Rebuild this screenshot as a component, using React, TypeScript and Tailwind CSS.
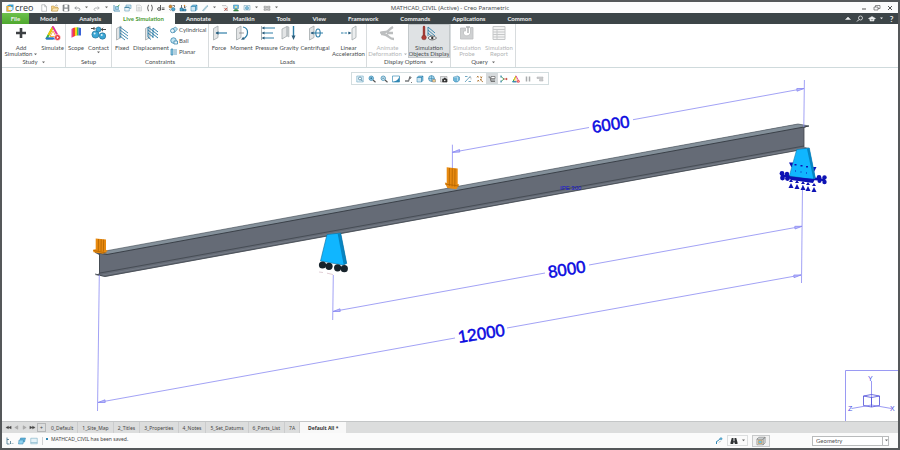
import type { ReactNode } from 'react';
import clsx from 'clsx';

function Svg({ children, className = 'size-4' }: { children: ReactNode; className?: string }) {
  return (
    <svg viewBox="0 0 16 16" className={clsx('shrink-0', className)} fill="none" stroke="currentColor" aria-hidden="true">
      {children}
    </svg>
  );
}

function Caret({ className = 'text-[#666]' }: { className?: string }) {
  return (
    <svg viewBox="0 0 4 3" className={clsx('inline-block w-[3px] h-[3px] shrink-0', className)} fill="currentColor" aria-hidden="true">
      <path d="M0 0h4L2 2.6z" />
    </svg>
  );
}

const plate = <path d="M2.500 3.500 7 1v11.500L2.500 15z" fill="#e3e5e6" stroke="#a3a9ac" strokeWidth=".8" />;

const icons: Record<string, ReactNode> = {
  // ribbon
  add: <path d="M8 3v10M3 8h10" stroke="#3d4043" strokeWidth="2.600" />,
  simulate: (
    <>
      <path d="M8 2 1.600 13.500H8" stroke="#35b34a" strokeWidth="2" strokeLinejoin="round" />
      <path d="M8 2 3.500 10" stroke="#f5c800" strokeWidth="2" />
      <path d="m8 2 6 11" stroke="#e5399b" strokeWidth="2" strokeLinecap="round" />
      <path d="M1.600 13.500H12" stroke="#2b6fd6" strokeWidth="2" strokeLinecap="round" />
      <path d="M8 6 5 11.500h6z" fill="#fff" stroke="#f59a1b" strokeWidth=".8" />
      <circle cx="12.500" cy="12.500" r="3" fill="#e8383d" stroke="#fff" strokeWidth=".6" />
      <path d="M11.800 11v3l2-1.500z" fill="#fff" stroke="none" />
    </>
  ),
  scope: (
    <g stroke="none">
      <path d="m3.500 4 1.500-1v9l-1.500.8z" fill="#e64090" />
      <path d="m5 3 2-.5V11l-2 1z" fill="#f3452f" />
      <path d="m7 2.500 2-.3v8.300l-2 .5z" fill="#f7d417" />
      <path d="m9 2.200 1.500.2v8l-1.500.1z" fill="#48c04b" />
      <path d="M10.500 2.400 13 3v7.500l-2.500-.1z" fill="#3a62d8" />
    </g>
  ),
  contact: (
    <>
      <circle cx="4.500" cy="9.500" r="3.600" fill="#3ba6d4" stroke="#17678f" strokeWidth=".6" />
      <circle cx="11.500" cy="11" r="3.200" fill="#3ba6d4" stroke="#17678f" strokeWidth=".6" />
      <circle cx="7.500" cy="4.500" r="2.500" fill="#3ba6d4" stroke="#17678f" strokeWidth=".6" />
      <circle cx="3.600" cy="8.500" r="1" fill="#d7f0fa" stroke="none" />
      <circle cx="10.700" cy="10" r="1" fill="#d7f0fa" stroke="none" />
      <path d="M10.500 4.500H15M12 2.800 10.300 4.500 12 6.200M0 3.500h3.500M2.500 2 4 3.500 2.500 5" stroke="#333" strokeWidth=".9" />
    </>
  ),
  fixed: (
    <>
      {plate}
      <path d="m6 2 8 6M6 5l8 6M6 8l8 6M6 11l5 4M6 2v11" stroke="#2f7fa8" strokeWidth=".9" />
    </>
  ),
  displacement: (
    <>
      {plate}
      <path d="m5 2 5 4M5 5l5 4M5 8l5 4M10 3l5 4M10 6l5 4M10 9l5 4M5 2v10M10 3v10M5 12l3 2.500" stroke="#2f7fa8" strokeWidth="1" />
    </>
  ),
  force: (
    <>
      {plate}
      <path d="M5 8h11" stroke="#2f7fa8" strokeWidth="1.200" />
      <path d="m4.500 8 3-1.800v3.600z" fill="#2f5f7c" stroke="none" />
    </>
  ),
  moment: (
    <>
      {plate}
      <path d="M9 2c6 1 6 9 0 12" stroke="#2f7fa8" strokeWidth="1.200" />
      <path d="M5 8h5" stroke="#777" strokeWidth=".7" />
      <path d="m7 14.800 2.200-3 1.500 2.600z" fill="#2f5f7c" stroke="none" />
    </>
  ),
  pressure: (
    <>
      <path d="M2.500 1v14" stroke="#a3a9ac" strokeWidth=".9" />
      <path d="M4 3h12M4 8h10M4 13h11" stroke="#2f7fa8" strokeWidth="1.200" />
      <path d="m2.500 3 3-1.500v3zM2.500 8l3-1.500v3zM2.500 13l3-1.500v3z" fill="#2f5f7c" stroke="none" />
    </>
  ),
  gravity: (
    <>
      <path d="M1 4 6 1.500V11l-5 3z" fill="#e3e5e6" stroke="#a3a9ac" strokeWidth=".8" />
      <path d="m6 1.500 2 .5v10l-2-1z" fill="#c5cacc" stroke="#a3a9ac" strokeWidth=".5" />
      <path d="M12.500 1v10" stroke="#2f7fa8" strokeWidth="1.400" />
      <path d="M10.500 10.500h4l-2 4.500z" fill="#2f5f7c" stroke="none" />
    </>
  ),
  centrifugal: (
    <>
      {plate}
      <ellipse cx="11" cy="8" rx="2.200" ry="4" stroke="#2f7fa8" strokeWidth="1.100" />
      <path d="M4 8h12" stroke="#2f7fa8" />
      <path d="m3.500 8 3-1.600v3.200z" fill="#2f5f7c" stroke="none" />
    </>
  ),
  linear: (
    <>
      <path d="m11 3.500 4-2.500v11.500L11 15z" fill="#eceeef" stroke="#a3a9ac" strokeWidth=".8" />
      <path d="M0 8h9" stroke="#2f7fa8" strokeWidth="1.200" strokeDasharray="2.500 1" />
      <path d="m10.500 8-3-1.600v3.200z" fill="#2f5f7c" stroke="none" />
    </>
  ),
  animate: <path d="M0 8c2-1.500 6 0 8-2s3-3 5-4M1 9c4-.5 6 1 8 3s3 2 5 2M7 8h6" stroke="#bcbebf" strokeWidth="2.400" />,
  objects: (
    <>
      <path d="M3 2v8" stroke="#a03a35" strokeWidth="2.400" strokeLinecap="round" />
      <circle cx="3" cy="12.500" r="2.300" fill="#b03a34" stroke="#70302d" strokeWidth=".5" />
      <path d="m7 2 7 6M7 5l7 6M7 8l4 3.500M7 2v9" stroke="#2f7fa8" strokeWidth=".9" />
      <path d="M7 13c2-2.500 6-2.500 8.500 0-2.500 2.500-6.500 2.500-8.500 0z" fill="#fff" stroke="#444" strokeWidth=".8" />
      <circle cx="11.300" cy="13" r="1.200" fill="#333" stroke="none" />
    </>
  ),
  probe: (
    <>
      <path d="M1.500 3h5v3h-2v3c2 3 6 2 7-1V2.500h2.500V14H1.500z" fill="#cfd1d2" stroke="#bcbebf" strokeWidth=".8" />
      <path d="M7 2h4M9 2v6" stroke="#b0b2b3" strokeWidth="1.400" />
    </>
  ),
  report: (
    <>
      <path d="M2 1.500h12v13H2z" stroke="#c6c8c9" fill="#f3f3f3" />
      <path d="M2 4.500h12M2 7h12M2 9.500h12M2 12h12M6 4v10" stroke="#c6c8c9" />
    </>
  ),
  cylindrical: (
    <>
      <path d="M4 6.500 11 2l4 4-6 7z" fill="#bfe3f2" stroke="#2f7fa8" strokeWidth="1.300" />
      <circle cx="5" cy="9.500" r="4" fill="#e8f5fb" stroke="#2f7fa8" strokeWidth="1.500" />
    </>
  ),
  ball: (
    <>
      <circle cx="7" cy="7" r="5.500" fill="#bfe3f2" stroke="#2f7fa8" strokeWidth="1.500" />
      <path d="M8 8h7v6H8z" fill="#e8f5fb" stroke="#2f7fa8" strokeWidth="1.500" />
    </>
  ),
  planar: (
    <>
      <path d="M2 2h4v12H2z" fill="#8ecbe6" stroke="#2f7fa8" strokeWidth="1.400" />
      <path d="M8 4h6M8 8h6M8 12h6" stroke="#2f7fa8" strokeWidth="1.500" />
    </>
  ),
  // quick access
  new: <path d="M3.500 1.500h6l3.500 4v9H3.500zM9.500 1.500v4H13" fill="#fff" stroke="#8b8f92" />,
  open: (
    <>
      <path d="M1 14V4h5l1.500 2H13v8z" fill="#f6d58c" stroke="#b98a35" />
      <path d="m1 14 3-6h11l-2 6z" fill="#fbe7b5" stroke="#b98a35" />
      <path d="M9 4c0-2 3-3 4-1" stroke="#555" />
    </>
  ),
  save: (
    <>
      <path d="M2 2h12v12H2z" fill="#8d9295" stroke="#5d6265" />
      <path d="M5 2h6v5H5zM4.500 9.500h7V14h-7z" fill="#fff" stroke="none" />
    </>
  ),
  undo: <path d="M4 8h6c5 0 5 5 1 5M6.500 5 3.500 8l3 3" stroke="#8a8d90" strokeWidth="1.800" />,
  redo: <path d="M12 8H6c-5 0-5 5-1 5M9.500 5l3 3-3 3" stroke="#a6a8aa" strokeWidth="1.800" />,
  regen: (
    <>
      <path d="M2 2v12h12" stroke="#2f7fa8" strokeWidth="1.600" />
      <path d="M5 5h6v6H5z" fill="#9ad0e8" stroke="#2f7fa8" />
      <path d="m9 5 4-3" stroke="#49a14b" strokeWidth="2" />
    </>
  ),
  windows: (
    <>
      <path d="M4 2h10v7H4z" fill="#cfe8f4" stroke="#4a88a8" />
      <path d="M1.500 6h9v8h-9z" fill="#e8f3f8" stroke="#4a88a8" />
      <path d="M1.500 6h9v2h-9z" fill="#4a88a8" stroke="none" />
    </>
  ),
  paste: <path d="M3 2h7l3 3v9H3zM5 7h6M5 9.500h6M5 12h6" stroke="#b5b8ba" fill="#f4f4f4" />,
  braces: <path d="M6 2C3 2 5 7 2.500 8 5 9 3 14 6 14M10 2c3 0 1 5 3.500 6-2.500 1-.5 6-3.500 6" stroke="#444" strokeWidth="1.800" />,
  equals: (
    <>
      <circle cx="4" cy="10" r="2.800" stroke="#444" strokeWidth="1.700" />
      <path d="M7 2v11M9.500 8H15M9.500 11H15" stroke="#444" strokeWidth="1.700" />
    </>
  ),
  parts: (
    <>
      <circle cx="5" cy="5" r="3" fill="#d98a2b" stroke="#7a5520" />
      <circle cx="10.500" cy="10.500" r="3.500" fill="#4fa6ce" stroke="#205f80" />
      <path d="M9 3h4v3M3 10l2 3" stroke="#333" strokeWidth="1.300" />
    </>
  ),
  layers: (
    <>
      <path d="M2 8h6v6H2zM8 10h6v4H8z" fill="#4fa6ce" stroke="#205f80" />
      <path d="M5 2v6M11 3v5l3-3" stroke="#333" strokeWidth="1.400" />
      <circle cx="11" cy="3" r="1.500" fill="#d98a2b" stroke="none" />
    </>
  ),
  box: (
    <>
      <path d="M2 5h9v9H2z" fill="#cfe8f4" stroke="#2f7fa8" />
      <path d="m2 5 3-3h9l-3 3zM14 2v9l-3 3V5z" fill="#79bfe0" stroke="#2f7fa8" />
    </>
  ),
  line: <path d="M3 13 12 3l2 1-9 10z" fill="#b9dcea" stroke="#6a9ab0" />,
  cut: (
    <>
      <path d="M2 3h8l3 3v7H6" fill="#f1f1f1" stroke="#9a9da0" />
      <path d="m7 8 5 5M12 8l-5 5" stroke="#c0392b" strokeWidth="1.600" />
    </>
  ),
  render: (
    <>
      <path d="M3 2h10v7H3z" fill="#6cc0e6" stroke="#2f7fa8" />
      <path d="M3 14c2-5 8-5 10 0z" fill="#3f9a4d" stroke="#2b6b36" />
      <circle cx="8" cy="6" r="2" fill="#f3e3a0" stroke="none" />
    </>
  ),
  select: (
    <>
      <path d="M2 3h12v9H2z" fill="#e3f1f8" stroke="#6a9ab0" />
      <circle cx="8" cy="8" r="3" fill="#8ac5df" stroke="#2f7fa8" />
    </>
  ),
  grid: <path d="M2 4.500h5v3H2zM9 4.500h5v3H9zM2 9.500h5v3H2zM9 9.500h5v3H9z" fill="#d5d7d8" stroke="#777" />,
  // graphics toolbar
  refit: (
    <>
      <path d="M1.500 2h13v12h-13z" fill="#dff0f8" stroke="#5f9cb8" />
      <circle cx="8" cy="7" r="3" fill="#fff" stroke="#2f6f90" strokeWidth="1.300" />
      <path d="m10 9 3 3.500" stroke="#2f6f90" strokeWidth="1.600" />
    </>
  ),
  zoomIn: (
    <>
      <circle cx="6.500" cy="6.500" r="4.500" fill="#8fd0ee" stroke="#2f7fa8" strokeWidth="1.400" />
      <path d="m10 10 5 4.500" stroke="#555" strokeWidth="2.200" />
      <path d="M4.500 6.500h4M6.500 4.500v4" stroke="#174e6b" strokeWidth="1.200" />
    </>
  ),
  zoomOut: (
    <>
      <circle cx="6.500" cy="6.500" r="4.500" fill="#c6e6f4" stroke="#2f7fa8" strokeWidth="1.400" />
      <path d="m10 10 5 4.500" stroke="#555" strokeWidth="2.200" />
      <path d="M4.500 6.500h4" stroke="#174e6b" strokeWidth="1.200" />
    </>
  ),
  repaint: (
    <>
      <path d="M1 2h14v12H1z" fill="#fff" stroke="#3d8fb7" strokeWidth="1.400" />
      <path d="M1 14C8 13 13 9 15 3v11z" fill="#2f86b3" stroke="none" />
    </>
  ),
  tools: (
    <>
      <path d="M2 12h7l3-8" stroke="#7a7d80" strokeWidth="2.600" />
      <path d="M12 2v5l3-2M14 15h2" stroke="#444" strokeWidth="1.400" />
    </>
  ),
  globe: (
    <>
      <circle cx="7" cy="7" r="5.800" fill="#a9d9ee" stroke="#2f7fa8" strokeWidth="1.300" />
      <path d="M7 1v12M1 7h12" stroke="#2f7fa8" />
      <path d="M9 9h6v5H9z" fill="#f1cf8f" stroke="#777" />
    </>
  ),
  camera: (
    <>
      <path d="M1 3h13v11H1z" fill="#e1e4e6" stroke="#888" />
      <path d="M5 8h9v6H5zM8 6h3v2H8z" fill="#333" stroke="#333" />
      <circle cx="9.500" cy="11" r="1.500" fill="#fff" stroke="none" />
    </>
  ),
  views: (
    <>
      <path d="m3 4 8-2 4 2v6l-4 4H6L3 11z" fill="#6db7da" stroke="#2f7fa8" />
      <path d="M3 4h8v8" stroke="#fff" />
    </>
  ),
  axis: (
    <>
      <path d="M2 14 13 2M2 3h5M9 13h5" stroke="#4d93b4" strokeWidth="1.600" />
      <path d="M10 5h4v4" stroke="#888" />
    </>
  ),
  points: <path d="m2 2 3 3m0-3L2 5m7-2 3 3m0-3L9 6M3 10l3 3m0-3-3 3m5-4 6 5M8 9l4-1" stroke="#a86a20" strokeWidth="1.600" />,
  annot: (
    <>
      <path d="M6 3h8v4H6z" fill="#fff" stroke="#555" strokeWidth="1.200" />
      <path d="M1 4h3M6 10h8M6 13h8M4 4l2 9" stroke="#555" strokeWidth="1.500" />
    </>
  ),
  spin: (
    <>
      <path d="m2 3 6 5-6 5" stroke="#3c9f55" strokeWidth="1.700" />
      <path d="M7 8h7M12 6l2.500 2L12 10" stroke="#c0392b" strokeWidth="1.600" />
      <path d="M2 1v4M2 11v4" stroke="#2f7fa8" strokeWidth="2.200" />
    </>
  ),
  pause: <path d="M5 3v10M11 3v10" stroke="#a9abad" strokeWidth="3" />,
  stop: <path d="M2 4h12v3H2zM7 9h7v3H7z" fill="#cfd1d2" stroke="#a9abad" />,
  // status bar
  tree: <path d="M2 1v13h5M2 5h4M9 13h1.500M13 13h1.500M9 8v6" stroke="#44748c" strokeWidth="1.600" />,
  browser: (
    <>
      <path d="M5 2h10l-2 8H4z" fill="#63b5dc" stroke="#2f7fa8" />
      <path d="M2 6h9l-1 8H1z" fill="#8ed0ee" stroke="#2f7fa8" />
    </>
  ),
  panel: <path d="M1.500 2.500h13v11h-13zM1.500 11h13" fill="#e5f2f8" stroke="#7aaec6" strokeWidth="1.200" />,
  link: (
    <>
      <path d="M3 14V9l4-2 3-4h4" stroke="#2f86b3" strokeWidth="2" />
      <circle cx="12" cy="3.500" r="2.200" fill="#6cc0e6" stroke="#2f7fa8" />
      <path d="m8 11 3-3" stroke="#555" />
    </>
  ),
  find: (
    <g fill="#2f3234" stroke="none">
      <path d="M3.500 2H7v6.500H9V2h3.500L15 11v3h-5.500v-3h-3v3H1v-3z" />
      <path d="M7 5h2v3H7z" fill="#8b8f92" />
    </g>
  ),
  cube: (
    <>
      <path d="M1.500 5h10v9h-10z" fill="#f6fafc" stroke="#777" />
      <path d="m1.500 5 3-3h10l-3 3zM14.500 2v9l-3 3V5z" fill="#dfe5e8" stroke="#777" />
      <path d="M3.500 7h6v5h-6z" fill="#6cc0e6" stroke="#d98a2b" />
    </>
  ),
};

type Item = { icon: string; lines: string[]; width: string; caret?: boolean; state?: 'off' | 'on' };

function RibbonButton({ icon, lines, width, caret, state }: Item) {
  return (
    <button
      type="button"
      disabled={state === 'off'}
      className={clsx(
        'flex h-[34px] flex-col items-center whitespace-nowrap pt-px leading-[6px]',
        width,
        state === 'off' && 'text-[#b3b5b6]',
        state === 'on' && 'bg-[#dfe2e4] outline-1 -outline-offset-1 outline-[#c3c8ca]',
      )}
    >
      <Svg>{icons[icon]}</Svg>
      <span className="mt-1">{lines[0]}</span>
      {(lines[1] || caret) && (
        <span className="flex items-center gap-0.5">
          {lines[1]}
          {caret && <Caret className={state === 'off' ? 'text-[#b3b5b6]' : 'text-[#666]'} />}
        </span>
      )}
    </button>
  );
}

function Group({ label, caret, children }: { label: string; caret?: boolean; children: ReactNode }) {
  return (
    <section className="flex flex-col justify-between border-r border-[#d8dcde] pb-px">
      <div className="flex">{children}</div>
      <h2 className="flex items-center justify-center gap-1 leading-[8px]">
        {label}
        {caret && <Caret />}
      </h2>
    </section>
  );
}

const quick = ['new', 'open', 'save', 'undo', '|', 'redo', '|', 'regen', 'windows', 'paste', 'braces', 'equals', 'parts', 'layers', 'box', 'line', '|', 'cut', 'render', 'select', '|', 'grid', '|'];
const menus = ['Annotate', 'Manikin', 'Tools', 'View', 'Framework', 'Commands', 'Applications', 'Common'];
const graphics = ['refit', 'zoomIn', 'zoomOut', 'repaint', 'tools', 'box', 'globe', 'camera', 'views', 'axis', 'points', 'annot', 'spin', 'simulate', 'pause', 'stop'];
const sheets = ['0_Default', '1_Site_Map', '2_Titles', '3_Properties', '4_Notes', '5_Set_Datums', '6_Parts_List', '7A'];
const small = [
  { icon: 'cylindrical', label: 'Cylindrical' },
  { icon: 'ball', label: 'Ball' },
  { icon: 'planar', label: 'Planar' },
];

function TitleBar() {
  return (
    <header className="grid h-[11px] grid-cols-[1fr_auto_1fr] items-center bg-[#fcfcfc]">
      <div className="flex items-center">
        <div className="ml-1 flex w-[32px] items-center gap-px">
          <svg viewBox="0 0 16 16" className="size-2 shrink-0" aria-hidden="true">
            <path d="M1 4 6 1h9v10l-5 4H1z" fill="#3d9cc9" />
            <path d="M1 4h9v11H1z" fill="#f2b23c" />
            <path d="M5 6h8v6H5z" fill="#e6f4fa" />
          </svg>
          <span className="font-['Open_Sans',sans-serif] text-[9px] leading-[9px] text-[#33383b]">creo</span>
        </div>
        {quick.map((name, i) =>
          name === '|' ? (
            <button key={i} type="button" aria-label="More" className="flex w-[9px] justify-center">
              <Caret />
            </button>
          ) : (
            <button key={i} type="button" aria-label={name} className="flex w-[11px] justify-center">
              <Svg className="size-2">{icons[name]}</Svg>
            </button>
          ),
        )}
      </div>
      <h1 className="font-['Noto_Sans',sans-serif]">MATHCAD_CIVIL (Active) - Creo Parametric</h1>
      <div className="flex justify-end gap-[5px] pr-1 text-[#555]">
        <button type="button" aria-label="Minimize">
          <Svg className="size-2"><path d="M4 10h8" strokeWidth="2" /></Svg>
        </button>
        <button type="button" aria-label="Restore">
          <Svg className="size-2"><path d="M2 6h8v6H2zM5 6V3h9v6h-4" strokeWidth="1.300" /></Svg>
        </button>
        <button type="button" aria-label="Close">
          <Svg className="size-2"><path d="m4 4 8 8M12 4l-8 8" strokeWidth="2" /></Svg>
        </button>
      </div>
    </header>
  );
}

function MenuBar() {
  return (
    <nav className="flex h-[11px] items-stretch bg-[#3d4548] font-bold text-[#eceeee]">
      <button type="button" className="w-[27px] bg-linear-to-b from-[#6cc04a] to-[#4fa82e]">File</button>
      <button type="button" className="px-[11px]">Model</button>
      <button type="button" className="px-[11px]">Analysis</button>
      <button type="button" className="bg-white px-[11px] text-[#4c9a35]">Live Simulation</button>
      {menus.map((m) => (
        <button key={m} type="button" className="px-[11px]">{m}</button>
      ))}
      <div className="ml-auto flex items-center gap-1 pr-0.5">
        <button type="button" aria-label="Collapse ribbon">
          <Svg className="size-2"><path d="m3 9 5-5 5 5z" fill="currentColor" /></Svg>
        </button>
        <button type="button" aria-label="Search">
          <Svg className="size-2"><circle cx="9" cy="6" r="4" strokeWidth="1.500" /><path d="m6 9-4 4" strokeWidth="2" /></Svg>
        </button>
        <button type="button" aria-label="Learning">
          <Svg className="size-2"><path d="m1 7 7-4 7 4-7 4zM4 9v3h8V9" fill="currentColor" /></Svg>
        </button>
        <Caret className="text-[#eceeee]" />
        <button type="button" aria-label="Help" className="w-[9px] text-[8px] leading-[8px]">?</button>
      </div>
    </nav>
  );
}

function Ribbon() {
  return (
    <div className="flex h-[44px] border-b border-[#cfdadc] bg-white">
      <Group label="Study" caret>
        <RibbonButton icon="add" lines={['Add', 'Simulation']} width="w-[38px]" caret />
        <RibbonButton icon="simulate" lines={['Simulate']} width="w-[25px]" />
      </Group>
      <Group label="Setup">
        <RibbonButton icon="scope" lines={['Scope']} width="w-[20px]" />
        <RibbonButton icon="contact" lines={['Contact']} width="w-[25px]" caret />
      </Group>
      <Group label="Constraints">
        <RibbonButton icon="fixed" lines={['Fixed']} width="w-[20px]" />
        <RibbonButton icon="displacement" lines={['Displacement']} width="w-[38px]" />
        <ul className="flex w-[38px] flex-col gap-[3px] pt-0.5">
          {small.map((s) => (
            <li key={s.label}>
              <button type="button" className="flex items-center gap-px leading-[8px]">
                <Svg className="size-2">{icons[s.icon]}</Svg>
                {s.label}
              </button>
            </li>
          ))}
        </ul>
      </Group>
      <Group label="Loads">
        <RibbonButton icon="force" lines={['Force']} width="w-[20px]" />
        <RibbonButton icon="moment" lines={['Moment']} width="w-[25px]" />
        <RibbonButton icon="pressure" lines={['Pressure']} width="w-[25px]" />
        <RibbonButton icon="gravity" lines={['Gravity']} width="w-[20px]" />
        <RibbonButton icon="centrifugal" lines={['Centrifugal']} width="w-[32px]" />
        <RibbonButton icon="linear" lines={['Linear', 'Acceleration']} width="w-[35px]" />
      </Group>
      <Group label="Display Options" caret>
        <RibbonButton icon="animate" lines={['Animate', 'Deformation']} width="w-[41px]" caret state="off" />
        <RibbonButton icon="objects" lines={['Simulation', 'Objects Display']} width="w-[42px]" state="on" />
      </Group>
      <Group label="Query" caret>
        <RibbonButton icon="probe" lines={['Simulation', 'Probe']} width="w-[32px]" state="off" />
        <RibbonButton icon="report" lines={['Simulation', 'Report']} width="w-[32px]" state="off" />
      </Group>
    </div>
  );
}

// dimension value set along its leader line
function DimText({ x, y, children }: { x: number; y: number; children: string }) {
  return (
    <text
      transform={`translate(${x} ${y}) rotate(-9)`}
      className="fill-[#0a0ae0] stroke-[#0a0ae0] font-['Liberation_Sans',sans-serif] text-[17px]"
      strokeWidth=".5"
    >
      {children}
    </text>
  );
}

const pins = [791, 797, 803, 808, 814];

function Model() {
  return (
    <svg viewBox="2 68 896 353" className="absolute inset-0 size-full" role="img" aria-label="IPE 300 beam with supports, loads and dimensions">
      {/* beam */}
      <path d="M95 252.500 107 251 798 124l11 2-5 2v19l5 1-3 1-701 127.700L95 275l4-1.500V255z" fill="#656b76" />
      <path d="m95 252.500 12-1.800L798 124l11 2-5 1L107 254.500z" fill="#84909a" />
      <path d="m95 252.500 12 2L804 127l5-1" stroke="#3b4149" fill="none" />
      <path d="m95 252.500 12-1.800L798 124l11 2" stroke="#59626a" strokeWidth=".7" fill="none" />
      <path d="M100 273 804 146M95 274l10 2.500L809 148.300" stroke="#3f454d" strokeWidth=".8" fill="none" />
      <path d="M102.500 275 806 147.600" stroke="#7b838c" strokeWidth=".7" />
      <path d="M99.500 254v20M804 127v20" stroke="#3f454d" strokeWidth=".8" />

      {/* dimensions */}
      <g stroke="#8a8af2" strokeWidth=".8" fill="none">
        <path d="M452.400 144.700V168M804.400 80l-.6 47M452.500 152.300 589 127.500M633 119.700 804 88.500" />
        <path d="m333.300 275-.6 45M333 311.500 545 273M589 265l213-38.700" />
        <path d="M99.300 275 97.500 411M802.500 185l-1 98M98 402.500 455 338M507 328l294-53" />
        <path d="m459.500 149.500-7 2.800 7.200-.2zM797 91.200l7-2.700-7.200 0zM340 308.800l-7 2.700 7.200 0zM795 229l7-2.700-7.200 0zM105 399.800l-7 2.700 7.200 0zM794 277.700l7-2.700-7.200 0z" fill="#b9b9fa" />
      </g>
      <path d="m319 272 4 .5m4 .7 6 1.300" stroke="#d9c3cb" strokeWidth=".8" />
      <DimText x={593} y={133}>6000</DimText>
      <DimText x={549} y={278}>8000</DimText>
      <DimText x={459} y={343}>12000</DimText>
      <text x="560" y="190" className="fill-[#1414d2] font-['Liberation_Sans',sans-serif] text-[6px]">IPE 300</text>

      {/* loads */}
      <g fill="#e88a10">
        <path d="m95.700 238.500 10.300 1V250l2 .8-5 3-9.500-1.500-.5-2.500 2.700-.5z" />
        <path d="m446.700 167.300 11 1.200v15.500l1.600.6-3 4.700-9-1.400-2.500-5.300 1.900.4z" />
      </g>
      <path d="m98.500 239-.2 12m2.900-11.700-.2 12m2.600-11.700-.2 12M449.500 168l-.2 18m3-17.600-.2 18m2.900-17.700-.2 18" stroke="#b36400" strokeWidth=".8" />
      <path d="m93.500 250.500 13 2.500m338.500-69 13.500 2" stroke="#b36400" strokeWidth=".8" />

      {/* roller support */}
      <path d="M327 234.500 340.700 233l6 30.500-4 1.500-22.200-4z" fill="#10b6ff" />
      <path d="m337.700 234 3-.8 6 30-3 1.800z" fill="#0785c2" />
      <path d="M327 234.500 340.700 233l6 30.500-4 1.500-22.200-4z" fill="none" stroke="#0b6d9e" strokeWidth=".6" />
      <g fill="#17232b">
        <circle cx="322.500" cy="265" r="3.600" />
        <circle cx="329" cy="266.300" r="3.600" />
        <circle cx="337.600" cy="267.800" r="3.600" />
        <circle cx="344.300" cy="268.700" r="3.600" />
      </g>

      {/* pinned support */}
      <path d="m781 175.500 44 4.500" stroke="#0d12b4" strokeWidth="2.500" />
      <g fill="#0d12b4">
        {pins.map((x, i) => (
          <g key={x}>
            <path d={`M${x - 2.500} ${188 + i}h5l-2.500-5z`} />
            <path d={`M${x - 2} ${182 + i}h4l-2-3z`} />
          </g>
        ))}
        <path d="M789 162.500h5l-2.500 5zM811.500 167h5l-2.500 5z" />
        <circle cx="782" cy="173.500" r="2.400" />
        <circle cx="782.500" cy="178" r="2.400" />
        <circle cx="787" cy="174" r="2.200" />
        <circle cx="787.500" cy="178.500" r="2.400" />
        <circle cx="819" cy="177.500" r="2.400" />
        <circle cx="819.500" cy="181" r="2" />
        <circle cx="824.500" cy="177.500" r="2.200" />
        <circle cx="824.500" cy="182" r="2.200" />
      </g>
      <path d="m796.700 149.500 12.600-1.500 6 30-3 1.500-23-3.500z" fill="#10b6ff" stroke="#0b6d9e" strokeWidth=".5" />
      <path d="m807 149 2.300-1 6.200 30-2 1.500z" fill="#0785c2" />
      <g fill="#0d12b4">
        <path d="M794.500 164h2v1.500h-2zM800.500 165h2v1.500h-2zM806 166h2v1.500h-2zM795 170.500h1v1h-1zM800.500 171.500h1v1h-1zM806 172.500h1v1h-1z" />
        <path d="m788 176.500 27 2.500-2 4-22-3z" />
      </g>

      {/* orientation cube */}
      <g stroke="#8080f0" strokeWidth=".8" fill="none">
        <path d="M845.500 421v-50.500H898" />
        <path d="M871.500 381v24M871.500 405l-20 3.500M871.500 405l20 3.500" />
        <path d="m863.500 396 8-1.500 8 1.500-8 1.500zM863.500 396v9.500l8 1.500 8-1.500V396M871.500 397.500v9.500" stroke="#4c4cd8" />
      </g>
      <g className="fill-[#4a4ae2] font-['Liberation_Sans',sans-serif] text-[7px]">
        <text x="868" y="381">Y</text>
        <text x="848" y="411">Z</text>
        <text x="890" y="411">X</text>
      </g>
    </svg>
  );
}

function Canvas() {
  return (
    <main className="relative flex-1 bg-white">
      <Model />
      <div className="relative mx-auto mt-1 flex h-[13px] w-fit items-center border border-[#d3dddf] bg-white px-0.5">
        {graphics.map((name) => (
          <button
            key={name}
            type="button"
            aria-label={name}
            className={clsx('flex h-[11px] w-3 items-center justify-center', name === 'annot' && 'bg-[#d6dadc]')}
          >
            <Svg className="size-2">{icons[name]}</Svg>
          </button>
        ))}
      </div>
    </main>
  );
}

function SheetTabs() {
  return (
    <div className="flex h-3 items-center border-t border-[#c4c6c7] bg-[#dcdddd] font-['Noto_Sans',sans-serif] text-[5px] text-[#444]">
      <div className="flex w-[35px] justify-around pl-0.5">
        <button type="button" aria-label="First"><Svg className="size-[7px]"><path d="M8 5v6L2 8zM14 5v6L8 8z" fill="currentColor" /></Svg></button>
        <button type="button" aria-label="Previous"><Svg className="size-[7px]"><path d="M11 4v8L4 8z" fill="#aaa" stroke="#999" /></Svg></button>
        <button type="button" aria-label="Next"><Svg className="size-[7px]"><path d="M5 4v8l7-4z" fill="#aaa" stroke="#999" /></Svg></button>
        <button type="button" aria-label="Last"><Svg className="size-[7px]"><path d="M2 5v6l6-3zM8 5v6l6-3z" fill="currentColor" /></Svg></button>
      </div>
      <button type="button" className="mr-px size-[9px] border border-[#b5b7b8] leading-[6px]">+</button>
      {sheets.map((s) => (
        <button key={s} type="button" className="h-full border-r border-[#cbcccd] px-1">{s}</button>
      ))}
      <button type="button" className="h-full bg-[#f8f8f8] px-2 font-bold text-[#333]">Default All *</button>
    </div>
  );
}

function StatusBar() {
  return (
    <footer className="flex h-[15px] items-center bg-[#fbfbfb]">
      <div className="flex w-[41px] items-center gap-1 border-r border-[#d0d2d3] pl-1">
        {['tree', 'browser', 'panel'].map((name) => (
          <button key={name} type="button" aria-label={name}><Svg className="size-2">{icons[name]}</Svg></button>
        ))}
      </div>
      <p className="ml-[3px] flex items-center gap-[3px] self-start pt-0.5 font-['Noto_Sans',sans-serif] text-[5px] text-[#444]">
        <span className="size-0.5 bg-[#2f86b3]" />
        MATHCAD_CIVIL has been saved.
      </p>
      <div className="ml-auto flex items-center pr-[9px]">
        <button type="button" aria-label="Regeneration status"><Svg className="size-2">{icons.link}</Svg></button>
        <div className="ml-1 flex h-[11px] items-center gap-1 border border-[#dcdedf] px-0.5">
          <button type="button" aria-label="Find"><Svg className="size-2">{icons.find}</Svg></button>
          <button type="button" aria-label="Find options" className="flex"><Caret /></button>
        </div>
        <button type="button" aria-label="Box select" className="ml-1 flex h-[12px] w-[18px] items-center justify-center border border-[#c8cacb] bg-[#f1f1f1]">
          <Svg className="size-[10px]">{icons.cube}</Svg>
        </button>
        <div className="relative ml-[42px] flex w-[77px]">
          <select aria-label="Selection filter" className="h-[10px] w-full appearance-none border border-[#b9bbbc] bg-white pl-[3px] leading-[8px] text-[#555]">
            <option>Geometry</option>
          </select>
          <span className="pointer-events-none absolute inset-y-0 right-0 flex w-[7px] items-center justify-center border-l border-[#b9bbbc]">
            <Caret />
          </span>
        </div>
      </div>
    </footer>
  );
}

export default function App() {
  return (
    <div className="flex min-h-screen flex-col border-2 border-[#55585a] bg-white font-[Lato,sans-serif] text-[6px] leading-[8px] text-[#4a4e50]">
      <TitleBar />
      <MenuBar />
      <Ribbon />
      <Canvas />
      <SheetTabs />
      <StatusBar />
    </div>
  );
}
